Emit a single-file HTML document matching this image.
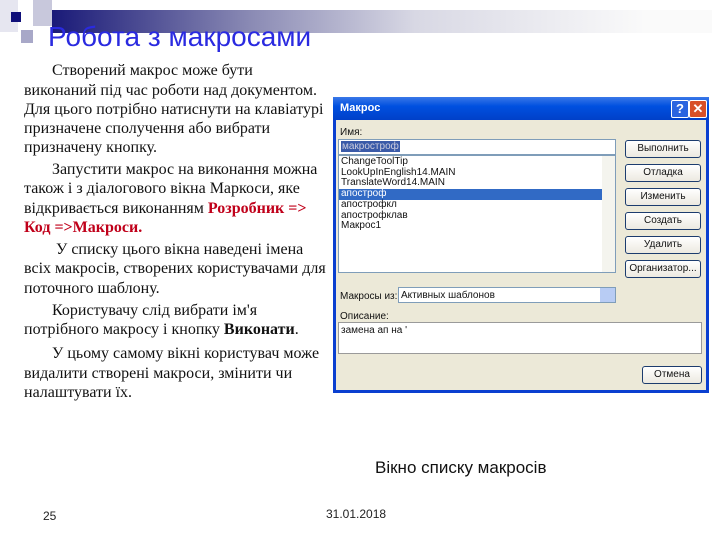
<!DOCTYPE html>
<html><head><meta charset="utf-8"><style>
body{margin:0;width:720px;height:540px;background:#fff;position:relative;overflow:hidden;font-family:"Liberation Serif",serif}
.a{position:absolute}
.l{position:absolute;left:24px;font-size:16px;line-height:18px;color:#111;white-space:nowrap}
.r{color:#c0001a;font-weight:bold}
.d{font-family:"Liberation Sans",sans-serif;font-size:10px;color:#111}
.btn{position:absolute;left:625px;width:74px;height:16px;border:1px solid #1c3c6e;border-radius:3px;background:linear-gradient(#fff,#ece9e0);font-family:"Liberation Sans",sans-serif;font-size:10px;text-align:center;line-height:16px;color:#111}
</style></head><body>
<div class="a" style="left:0;top:0;width:18px;height:32px;background:#e6e6f0"></div>
<div class="a" style="left:33px;top:0;width:19px;height:26px;background:#c8c8dc"></div>
<div class="a" style="left:21px;top:30px;width:12px;height:13px;background:#a8a8c8"></div>
<div class="a" style="left:11px;top:12px;width:10px;height:10px;background:#10107a"></div>
<div class="a" style="left:52px;top:10px;width:660px;height:23px;background:linear-gradient(90deg,#1a1a78,#8a8ab4 30%,#d8d8e4 55%,#fafafa 90%)"></div>
<div class="a" style="left:48px;top:21px;font-family:'Liberation Sans',sans-serif;font-size:28px;color:#2a2ae0;line-height:32px">Робота з макросами</div>

<div class="l" style="top:62px;left:52px">Створений макрос може бути</div>
<div class="l" style="top:82px">виконаний під час роботи над документом.</div>
<div class="l" style="top:101px">Для цього потрібно натиснути на клавіатурі</div>
<div class="l" style="top:120px">призначене сполучення або вибрати</div>
<div class="l" style="top:139px">призначену кнопку.</div>
<div class="l" style="top:161px;left:52px">Запустити макрос на виконання можна</div>
<div class="l" style="top:180px">також і з діалогового вікна Маркоси, яке</div>
<div class="l" style="top:200px">відкривається виконанням <span class="r">Розробник =&gt;</span></div>
<div class="l" style="top:219px"><span class="r">Код =&gt;Макроси.</span></div>
<div class="l" style="top:241px;left:56px">У списку цього вікна наведені імена</div>
<div class="l" style="top:260px">всіх макросів, створених користувачами для</div>
<div class="l" style="top:280px">поточного шаблону.</div>
<div class="l" style="top:302px;left:52px">Користувачу слід вибрати ім'я</div>
<div class="l" style="top:321px">потрібного макросу і кнопку <b>Виконати</b>.</div>
<div class="l" style="top:345px;left:52px">У цьому самому вікні користувач може</div>
<div class="l" style="top:365px">видалити створені макроси, змінити чи</div>
<div class="l" style="top:384px">налаштувати їх.</div>

<div class="a" style="left:333px;top:97px;width:376px;height:296px;background:#0a3fd0"></div>
<div class="a" style="left:333px;top:97px;width:376px;height:23px;background:linear-gradient(#3a78e8,#0050e0 40%,#0040c8)"></div>
<div class="a" style="left:340px;top:102px;font-family:'Liberation Sans',sans-serif;font-size:11px;font-weight:bold;color:#fff">Макрос</div>
<div class="a" style="left:671px;top:100px;width:16px;height:16px;background:#2a64e0;border:1px solid #fff;border-radius:2px;color:#fff;font:bold 13px 'Liberation Sans',sans-serif;text-align:center;line-height:16px">?</div>
<div class="a" style="left:689px;top:100px;width:16px;height:16px;background:#d85028;border:1px solid #fff;border-radius:2px;color:#fff;font:bold 13px 'Liberation Sans',sans-serif;text-align:center;line-height:16px">✕</div>
<div class="a" style="left:336px;top:120px;width:370px;height:270px;background:#ece9d8"></div>
<div class="a d" style="left:340px;top:127px">Имя:</div>
<div class="a" style="left:338px;top:139px;width:278px;height:16px;background:#fff;border:1px solid #7f9db9;box-sizing:border-box"></div>
<div class="a d" style="left:341px;top:141px;background:#3a5aa8;color:#ccd;padding:0 1px">макростроф</div>
<div class="a" style="left:338px;top:155px;width:278px;height:118px;background:#fff;border:1px solid #7f9db9;box-sizing:border-box"></div>
<div class="a" style="left:602px;top:156px;width:13px;height:116px;background:#f4f4ee"></div>
<div class="a" style="left:339px;top:189px;width:263px;height:11px;background:#316ac5"></div>
<div class="a d" style="left:341px;top:157px;line-height:10.7px">ChangeToolTip<br>LookUpInEnglish14.MAIN<br>TranslateWord14.MAIN<br><span style="color:#fff">апостроф</span><br>апострофкл<br>апострофклав<br>Макрос1</div>
<div class="btn" style="top:140px">Выполнить</div>
<div class="btn" style="top:164px">Отладка</div>
<div class="btn" style="top:188px">Изменить</div>
<div class="btn" style="top:212px">Создать</div>
<div class="btn" style="top:236px">Удалить</div>
<div class="btn" style="top:260px">Организатор...</div>
<div class="a d" style="left:340px;top:291px">Макросы из:</div>
<div class="a" style="left:398px;top:287px;width:218px;height:16px;background:#fff;border:1px solid #7f9db9;box-sizing:border-box"></div>
<div class="a d" style="left:401px;top:290px">Активных шаблонов</div>
<div class="a" style="left:600px;top:288px;width:15px;height:14px;background:#b8ccf4"></div>
<div class="a d" style="left:340px;top:311px">Описание:</div>
<div class="a" style="left:338px;top:322px;width:364px;height:32px;background:#fff;border:1px solid #9a9a9a;box-sizing:border-box"></div>
<div class="a d" style="left:341px;top:325px">замена ап на '</div>
<div class="btn" style="left:642px;width:58px;top:366px">Отмена</div>

<div class="a" style="left:375px;top:458px;font-family:'Liberation Sans',sans-serif;font-size:17px;color:#111">Вікно списку макросів</div>
<div class="a" style="left:43px;top:509px;font-family:'Liberation Sans',sans-serif;font-size:12px;color:#222">25</div>
<div class="a" style="left:326px;top:507px;font-family:'Liberation Sans',sans-serif;font-size:12px;color:#222">31.01.2018</div>
</body></html>
